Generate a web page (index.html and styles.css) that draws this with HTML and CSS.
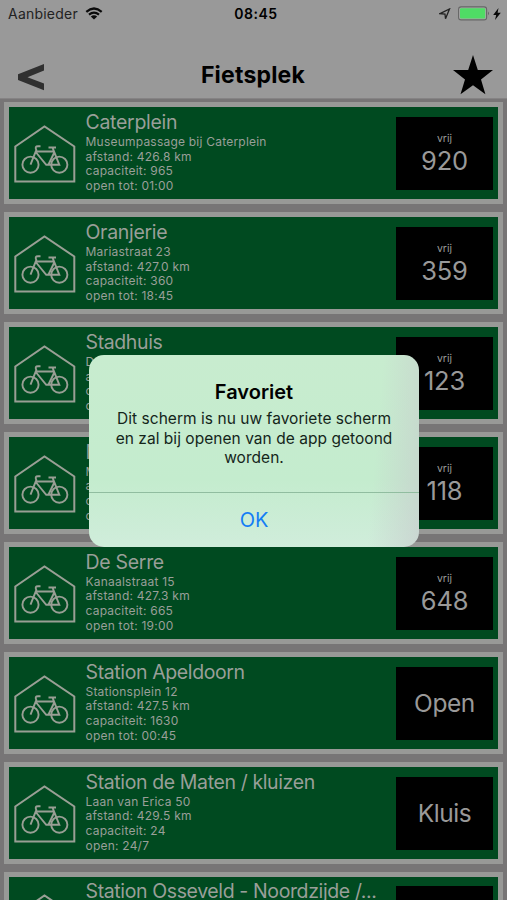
FILE: index.html
```html
<!DOCTYPE html>
<html lang="nl">
<head>
<meta charset="utf-8">
<title>Fietsplek</title>
<link rel="stylesheet" href="styles.css">
</head>
<body>
<svg class="sprite" aria-hidden="true">
  <symbol id="shelter" viewBox="0 0 62 58">
    <path d="M1.300 21.500 30.500 1.500 60.300 21.500V56.500H1.300Z" stroke-width="2"/>
    <circle cx="16.500" cy="39.700" r="8.100" stroke-width="1.900"/>
    <circle cx="45.300" cy="39.700" r="8.100" stroke-width="1.900"/>
    <path d="M16.500 39.700 22.300 25Q20.500 21.300 24 21.300H26.500M21.300 26.500 32.200 39.800H45.300L38.500 22.700M22 26.500H40M40.500 27 34.500 39.500M34.500 22.500H42" stroke-width="1.900"/>
  </symbol>
</svg>
<header class="header">
  <div class="status">
    <div class="carrier"><span>Aanbieder</span>
      <svg class="wifi" viewBox="0 0 18 13"><path d="M1.300 4.800Q9-1.800 16.700 4.800M4 7.700Q9 3.400 14 7.700" fill="none" stroke="#0b0b0b" stroke-width="2.200"/><path d="M5.800 9.500Q9 7 12.200 9.500L9 12.500Z" fill="#0b0b0b"/></svg>
    </div>
    <span class="time">08:45</span>
    <div class="power">
      <svg class="location" viewBox="0 0 12 12"><path d="M1 5.600 10.500 1 6.500 10.700 6 6Z" fill="none" stroke="#222" stroke-width="1.300"/></svg>
      <svg class="battery" viewBox="0 0 32 15"><rect x=".6" y=".9" width="28" height="13" rx="2.500" fill="#aaa" stroke="#666" stroke-width="1.100"/><rect x="2" y="2.300" width="25.200" height="10.200" rx="1" fill="#4fdc65"/><path d="M30 5.500Q32 7.400 30 9.300Z" fill="#666"/></svg>
      <svg class="bolt" viewBox="0 0 8 12"><path d="M5.500 0 .2 6.900H3.200L2 12 7.800 4.800H4.600Z" fill="#080808"/></svg>
    </div>
  </div>
  <div class="navbar">
    <svg class="back" viewBox="0 0 26 27"><path d="M26 0V6.600L9.500 13.300 26 19.500V26.200L0 15.900V10.200Z" fill="#303030"/></svg>
    <h1>Fietsplek</h1>
    <svg class="star" viewBox="0 0 40 40"><path d="M20 0 24.800 15H40L28 24.400 32.400 39.300 20 30.300 7.500 39.300 12 24.400 0 15H15.200Z" fill="#000"/></svg>
  </div>
</header>
<main class="list">
  <article class="card"><svg class="icon"><use href="#shelter"/></svg><div class="info"><h2>Caterplein</h2><p>Museumpassage bij Caterplein</p><p>afstand: 426.8 km</p><p>capaciteit: 965</p><p>open tot: 01:00</p></div><div class="count"><small>vrij</small><span>920</span></div></article>
  <article class="card"><svg class="icon"><use href="#shelter"/></svg><div class="info"><h2>Oranjerie</h2><p>Mariastraat 23</p><p>afstand: 427.0 km</p><p>capaciteit: 360</p><p>open tot: 18:45</p></div><div class="count"><small>vrij</small><span>359</span></div></article>
  <article class="card"><svg class="icon"><use href="#shelter"/></svg><div class="info"><h2>Stadhuis</h2><p>D</p><p>a</p><p>c</p><p>o</p></div><div class="count"><small>vrij</small><span>123</span></div></article>
  <article class="card"><svg class="icon"><use href="#shelter"/></svg><div class="info"><h2>M</h2><p>M</p><p>a</p><p>c</p><p>o</p></div><div class="count"><small>vrij</small><span>118</span></div></article>
  <article class="card"><svg class="icon"><use href="#shelter"/></svg><div class="info"><h2>De Serre</h2><p>Kanaalstraat 15</p><p>afstand: 427.3 km</p><p>capaciteit: 665</p><p>open tot: 19:00</p></div><div class="count"><small>vrij</small><span>648</span></div></article>
  <article class="card"><svg class="icon"><use href="#shelter"/></svg><div class="info"><h2>Station Apeldoorn</h2><p>Stationsplein 12</p><p>afstand: 427.5 km</p><p>capaciteit: 1630</p><p>open tot: 00:45</p></div><div class="count label"><span>Open</span></div></article>
  <article class="card"><svg class="icon"><use href="#shelter"/></svg><div class="info"><h2>Station de Maten / kluizen</h2><p>Laan van Erica 50</p><p>afstand: 429.5 km</p><p>capaciteit: 24</p><p>open: 24/7</p></div><div class="count label"><span>Kluis</span></div></article>
  <article class="card"><svg class="icon"><use href="#shelter"/></svg><div class="info"><h2>Station Osseveld - Noordzijde /...</h2></div><div class="count"></div></article>
</main>
<div class="dialog" role="alertdialog">
  <div class="message"><h3>Favoriet</h3><p>Dit scherm is nu uw favoriete scherm<br>en zal bij openen van de app getoond<br>worden.</p></div>
  <button class="ok">OK</button>
</div>
</body>
</html>
```
FILE: styles.css
```css
* { box-sizing: border-box; }
body { margin: 0; height: 900px; overflow: hidden; background: #777576; font-family: Inter, "Liberation Sans", sans-serif; color: #000; }
h1, h2, h3, p { margin: 0; }
svg { display: block; }
.sprite { position: absolute; width: 0; height: 0; }
.header { height: 99px; background: #999; border-bottom: 1px solid #858384; }
.status { height: 27px; padding: 0 6px 0 8px; display: grid; grid-template-columns: 1fr auto 1fr; align-items: center; font-size: 14px; }
.carrier { display: flex; align-items: center; gap: 7px; color: #222; letter-spacing: .22px; }
.wifi { width: 18px; height: 13px; }
.time { font-weight: 600; letter-spacing: .5px; padding-left: 3px; }
.power { display: flex; justify-content: flex-end; align-items: center; }
.location { width: 12px; height: 12px; margin-right: 7px; }
.battery { width: 32px; height: 15px; }
.bolt { width: 8px; height: 12px; margin-left: 3px; }
.navbar { height: 71px; display: grid; grid-template-columns: 1fr auto 1fr; align-items: center; padding: 22px 14px 0 18px; }
.back { width: 26px; height: 27px; margin-top: 7px; }
.navbar h1 { font-size: 23px; line-height: 28px; font-weight: 700; letter-spacing: .2px; padding: 2px 5px 0 0; }
.star { width: 40px; height: 40px; justify-self: end; margin-top: 2px; }
.list { display: grid; grid-auto-rows: 102px; row-gap: 7.930px; padding: 3.400px 4px 0; height: 801px; overflow: hidden; }
.card { display: flex; border: 5px solid #989997; background: #004a20; color: #999f99; }
.icon { width: 62px; height: 58px; margin: 17.600px 0 0 5px; flex: none; fill: none; stroke: #999f95; }
.info { flex: 1; min-width: 0; padding: 2.600px 0 0 9.500px; white-space: nowrap; }
.info h2 { font-size: 19.500px; line-height: 24px; font-weight: 400; margin-bottom: 1px; letter-spacing: -.38px; }
.card:first-child h2, .card:nth-child(2) h2, .card:nth-child(5) h2 { letter-spacing: -.3px; }
.info p { font-size: 12px; line-height: 14.670px; letter-spacing: .22px; }
.count { width: 97px; height: 73px; margin: 9.600px 5px 0 0; background: #000; flex: none; display: flex; flex-direction: column; align-items: center; padding-top: 14px; color: #999; }
.count small { font-size: 10.500px; line-height: 15px; }
.count span { font-size: 25.500px; line-height: 29px; letter-spacing: -.2px; }
.count.label { justify-content: center; padding: 0; }
.count.label span { font-size: 24.500px; letter-spacing: -.4px; padding-top: 1px; }
.dialog { position: absolute; left: 89px; top: 355px; width: 330px; height: 192px; border-radius: 15px; overflow: hidden; display: flex; flex-direction: column; background: linear-gradient(95deg, transparent 85%, #c8c8cdbb 103%), linear-gradient(180deg, #c8eccf 0%, #c4ecce 65%, #d0eddb 100%); text-align: center; }
.message { height: 138px; padding-top: 25px; border-bottom: 1px solid #91bda0; }
.message h3 { font-size: 20px; line-height: 25px; font-weight: 600; }
.message p { font-size: 15.500px; line-height: 19.500px; margin-top: 4px; color: #14251a; letter-spacing: .04px; white-space: nowrap; }
.ok { flex: 1; border: 0; padding: 0; background: transparent; color: #147df5; font: 400 20px/24px Inter, "Liberation Sans", sans-serif; }
```
